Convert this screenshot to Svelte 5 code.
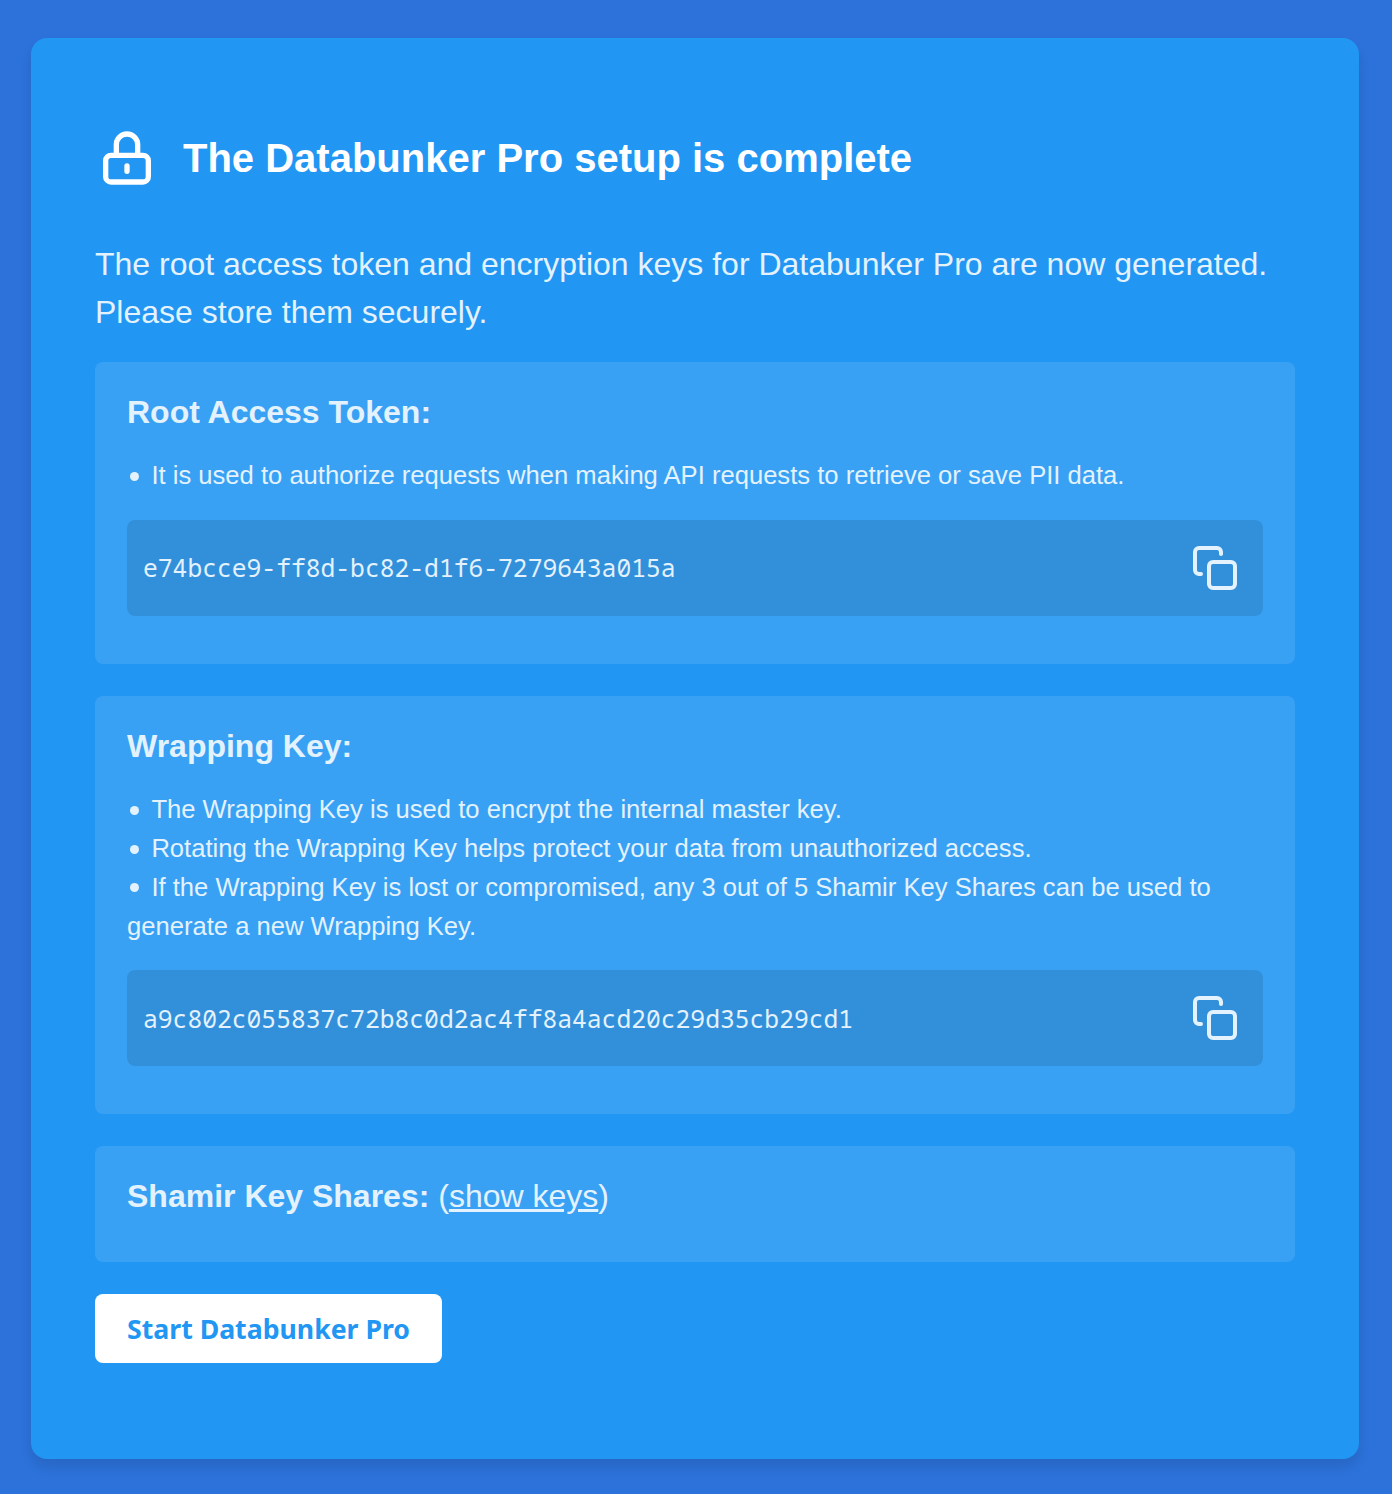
<script lang="ts">
  interface Secret {
    title: string;
    notes: string[];
    value: string;
  }

  const secrets: Secret[] = [
    {
      title: 'Root Access Token:',
      notes: ['It is used to authorize requests when making API requests to retrieve or save PII data.'],
      value: 'e74bcce9-ff8d-bc82-d1f6-7279643a015a',
    },
    {
      title: 'Wrapping Key:',
      notes: [
        'The Wrapping Key is used to encrypt the internal master key.',
        'Rotating the Wrapping Key helps protect your data from unauthorized access.',
        'If the Wrapping Key is lost or compromised, any 3 out of 5 Shamir Key Shares can be used to generate a new Wrapping Key.',
      ],
      value: 'a9c802c055837c72b8c0d2ac4ff8a4acd20c29d35cb29cd1',
    },
  ];

  function copyValue(value: string) {
    navigator.clipboard?.writeText(value);
  }
</script>

<main class="page">
  <div class="card">
    <header class="card-header">
      <svg class="lock" viewBox="0 0 24 24" fill="none" stroke="currentColor" stroke-width="2" stroke-linecap="round" stroke-linejoin="round">
        <path d="M12 15v2m-6 4h12a2 2 0 002-2v-6a2 2 0 00-2-2H6a2 2 0 00-2 2v6a2 2 0 002 2zm10-10V7a4 4 0 00-8 0v4h8z" />
      </svg>
      <h1>The Databunker Pro setup is complete</h1>
    </header>

    <p class="intro">
      The root access token and encryption keys for Databunker Pro are now generated. Please store them securely.
    </p>

    {#each secrets as secret}
      <section class="panel">
        <h2>{secret.title}</h2>
        <ul>
          {#each secret.notes as note}
            <li>{note}</li>
          {/each}
        </ul>
        <div class="secret">
          <code>{secret.value}</code>
          <button class="btn-copy" aria-label="Copy" onclick={() => copyValue(secret.value)}>
            <svg viewBox="0 0 24 24" fill="none" stroke="currentColor" stroke-width="2" stroke-linecap="round" stroke-linejoin="round">
              <rect x="9" y="9" width="13" height="13" rx="2" ry="2" />
              <path d="M5 15H4a2 2 0 0 1-2-2V4a2 2 0 0 1 2-2h9a2 2 0 0 1 2 2v1" />
            </svg>
          </button>
        </div>
      </section>
    {/each}

    <section class="panel shares">
      <h2>Shamir Key Shares: <span>(<a href="#keys">show keys</a>)</span></h2>
    </section>

    <button class="btn-start">Start Databunker Pro</button>
  </div>
</main>

<style>
  :global(body) {
    background: #2c72da;
  }

  .page {
    box-sizing: border-box;
    min-height: 1494px;
    padding: 38px 33px 35px 31px;
    display: flex;
    font-family: 'Liberation Sans', Arial, sans-serif;
    color: #e3f2fd;
  }

  .card {
    flex: 1;
    box-sizing: border-box;
    padding: 88px 64px 64px;
    border-radius: 16px;
    background: #2196f3;
    box-shadow: 0 8px 12px rgba(0, 0, 0, 0.1);
  }

  .card-header {
    display: flex;
    align-items: center;
    gap: 24px;
    color: #fff;
  }

  .lock {
    width: 64px;
    height: 64px;
  }

  h1 {
    margin: 0;
    font-size: 40px;
    line-height: 60px;
    font-weight: 700;
  }

  .intro {
    margin: 50px 0 26px;
    font-size: 32px;
    line-height: 48px;
  }

  .panel {
    padding: 26px 32px 48px;
    margin-bottom: 32px;
    border-radius: 8px;
    background: rgba(255, 255, 255, 0.105);
  }

  h2 {
    margin: 0;
    font-size: 32px;
    line-height: 48px;
    font-weight: 700;
  }

  h2 span {
    font-weight: 400;
  }

  h2 a {
    color: inherit;
  }

  ul {
    margin: 20.4px 0 25px;
    padding: 0;
    list-style: none;
    font-size: 25.6px;
    line-height: 38.7px;
  }

  li::before {
    content: '';
    display: inline-block;
    width: 9px;
    height: 9px;
    margin: 0 12.9px 0 2.5px;
    border-radius: 50%;
    background: currentColor;
    vertical-align: 3.5px;
  }

  .secret {
    display: flex;
    align-items: center;
    justify-content: space-between;
    height: 96px;
    box-sizing: border-box;
    padding: 16px;
    border-radius: 8px;
    background: rgba(0, 0, 0, 0.1);
  }

  code {
    padding-bottom: 0.4px;
    font-family: 'Noto Sans Mono', 'DejaVu Sans Mono', monospace;
    font-size: 24.66px;
  }

  .btn-copy {
    display: flex;
    padding: 8px;
    border: none;
    background: none;
    color: inherit;
    cursor: pointer;
  }

  .btn-copy svg {
    width: 48px;
    height: 48px;
  }

  .shares {
    padding-bottom: 42px;
  }

  .btn-start {
    height: 69px;
    padding: 0 32px;
    border: none;
    border-radius: 8px;
    background: #fff;
    color: #2196f3;
    font-family: 'Noto Sans', sans-serif;
    font-size: 26.67px;
    font-weight: 700;
    cursor: pointer;
  }
</style>
